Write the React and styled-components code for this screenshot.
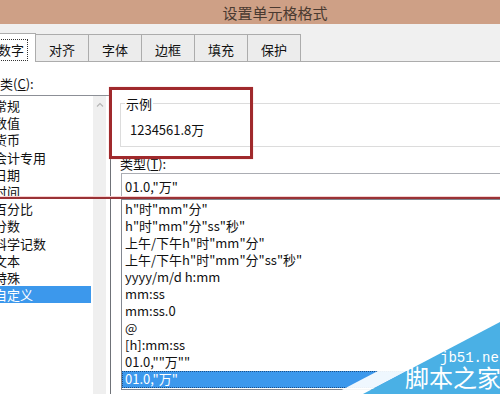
import React from "react";
import styled, { createGlobalStyle } from "styled-components";

const GlobalStyle = createGlobalStyle`
  html, body {
    margin: 0;
    padding: 0;
    width: 500px;
    height: 394px;
    overflow: hidden;
    background: #fff;
  }
  body {
    font-family: "Noto Sans CJK SC", "Liberation Sans", sans-serif;
    font-size: 13px;
    color: #111;
  }
`;

const Screen = styled.div`
  position: relative;
  width: 500px;
  height: 394px;
  overflow: hidden;
`;

const Dialog = styled.div`
  width: 578px;
  height: 394px;
  margin-left: -14px;
  display: flex;
  flex-direction: column;
`;

const TitleBar = styled.div`
  flex: none;
  height: 24px;
  background: #cea086;
  color: #4a3a31;
  font-size: 15px;
  display: flex;
  align-items: center;
  justify-content: center;
`;

const TabStrip = styled.div`
  flex: none;
  height: 37px;
  background: #f0f0f0;
  border-bottom: 1px solid #acacac;
  display: flex;
  align-items: flex-end;
`;

const Tab = styled.div`
  box-sizing: border-box;
  flex: none;
  position: relative;
  z-index: ${(p) => (p.$active ? 1 : 0)};
  width: ${(p) => (p.$first ? 50 : 54)}px;
  height: ${(p) => (p.$active ? 29 : 27)}px;
  margin-left: ${(p) => (p.$first ? 0 : -1)}px;
  margin-bottom: ${(p) => (p.$active ? -1 : 0)}px;
  padding-top: ${(p) => (p.$active ? 4 : 3)}px;
  border: 1px solid #acacac;
  border-bottom: none;
  background: ${(p) => (p.$active ? "#fff" : "#ececec")};
  display: flex;
  align-items: center;
  justify-content: center;
  line-height: 17px;
`;

const FocusText = styled.span`
  padding: 1px 3px 2px;
  outline: 1px dotted #333;
`;

const Body = styled.div`
  flex: 1;
  min-height: 0;
  background: #fff;
  display: grid;
  grid-template-columns: 125px 1fr;
  column-gap: 9px;
`;

const Column = styled.div`
  display: flex;
  flex-direction: column;
  min-height: 0;
`;

const Label = styled.div`
  flex: none;
  line-height: 17px;
  margin-top: ${(p) => p.$top}px;
  padding-left: ${(p) => p.$indent || 0}px;
  u {
    text-decoration: underline;
  }
`;

const CategoryBox = styled.div`
  flex: 1;
  margin-top: 3px;
  border-top: 1px solid #8c8f96;
  border-right: 1px solid #6f7278;
  display: grid;
  grid-template-columns: 1fr 13px;
  column-gap: 2px;
  padding-right: 4px;
`;

const CategoryList = styled.div`
  padding-top: 1px;
`;

const CategoryItem = styled.div`
  height: 17.2px;
  line-height: 17.2px;
  padding-left: 8px;
  white-space: nowrap;
  background: ${(p) => (p.$selected ? "#3c98ec" : "transparent")};
  color: ${(p) => (p.$selected ? "#fff" : "#111")};
`;

const ScrollTrack = styled.div`
  background: #efefef;
  display: flex;
  justify-content: center;
  padding-top: 6px;
`;

const GroupBox = styled.div`
  flex: none;
  box-sizing: border-box;
  height: 44px;
  margin-top: 41px;
  margin-right: 8px;
  border: 1px solid #dcdcdc;
`;

const Legend = styled.div`
  width: fit-content;
  margin: -9px 0 0 4px;
  padding: 0 1px;
  line-height: 17px;
  background: #fff;
`;

const Sample = styled.div`
  padding-left: 9px;
  margin-top: 9px;
  line-height: 17px;
`;

const TypeInput = styled.div`
  flex: none;
  box-sizing: border-box;
  height: 26px;
  margin: 1px 0 0 1px;
  border: 1px solid #abadb3;
  border-bottom: none;
  padding: 0 0 1px 3px;
  display: flex;
  align-items: center;
  white-space: nowrap;
`;

const TypeList = styled.div`
  flex: none;
  box-sizing: border-box;
  height: 191px;
  margin-left: 1px;
  border: 1px solid #828790;
  padding-top: 1px;
`;

const TypeItem = styled.div`
  box-sizing: border-box;
  height: 17px;
  line-height: 16px;
  padding-left: 3px;
  white-space: nowrap;
  background: ${(p) => (p.$selected ? "#3c98ec" : "transparent")};
  color: ${(p) => (p.$selected ? "#fff" : "#111")};
  outline: ${(p) => (p.$selected ? "1px dotted #1d4f86" : "none")};
  outline-offset: -1px;
`;

const Highlight = styled.div`
  position: absolute;
  left: 109px;
  top: 87px;
  width: 144px;
  height: 72px;
  box-sizing: border-box;
  border: 3px solid #a0292c;
  box-shadow: 0 0 1px #e9a3a3;
`;

const RedRule = styled.div`
  position: absolute;
  left: 0;
  right: 0;
  top: 197px;
  height: 2px;
  background: #9a3236;
  box-shadow: 0 -1px 0 #f7d2d2;
`;

const Watermark = styled.div`
  position: absolute;
  left: 330px;
  top: 290px;
  width: 170px;
  height: 104px;
  svg {
    display: block;
  }
`;

const MarkSite = styled.div`
  position: absolute;
  left: 110px;
  top: 60px;
  font-family: "Liberation Mono", "DejaVu Sans Mono", monospace;
  font-size: 14px;
  line-height: 16px;
  color: #fff;
`;

const MarkName = styled.div`
  position: absolute;
  left: 75px;
  top: 73px;
  font-family: "Noto Sans CJK SC", sans-serif;
  font-size: 24px;
  line-height: 28px;
  color: #fff;
  white-space: nowrap;
`;

const tabs = ["数字", "对齐", "字体", "边框", "填充", "保护"];

const categories = [
  "常规",
  "数值",
  "货币",
  "会计专用",
  "日期",
  "时间",
  "百分比",
  "分数",
  "科学记数",
  "文本",
  "特殊",
  "自定义"
];

const formats = [
  'h"时"mm"分"',
  'h"时"mm"分"ss"秒"',
  '上午/下午h"时"mm"分"',
  '上午/下午h"时"mm"分"ss"秒"',
  "yyyy/m/d h:mm",
  "mm:ss",
  "mm:ss.0",
  "@",
  "[h]:mm:ss",
  '01.0,""万""',
  '01.0,"万"'
];

export default function App() {
  return (
    <Screen>
      <GlobalStyle />
      <Dialog>
        <TitleBar>设置单元格格式</TitleBar>
        <TabStrip>
          {tabs.map((t, i) => (
            <Tab key={t} $first={i === 0} $active={i === 0}>
              {i === 0 ? <FocusText>{t}</FocusText> : t}
            </Tab>
          ))}
        </TabStrip>
        <Body>
          <Column>
            <Label $top={13} $indent={1}>
              分类(<u>C</u>):
            </Label>
            <CategoryBox>
              <CategoryList>
                {categories.map((c, i) => (
                  <CategoryItem key={c} $selected={i === categories.length - 1}>
                    {c}
                  </CategoryItem>
                ))}
              </CategoryList>
              <ScrollTrack>
                <svg width="8" height="5" viewBox="0 0 8 5">
                  <path d="M1 4.5 L4 1.5 L7 4.5" fill="none" stroke="#b5b5b5" strokeWidth="1.2" />
                </svg>
              </ScrollTrack>
            </CategoryBox>
          </Column>
          <Column>
            <GroupBox>
              <Legend>示例</Legend>
              <Sample>1234561.8万</Sample>
            </GroupBox>
            <Label $top={8}>
              类型(<u>T</u>):
            </Label>
            <TypeInput>01.0,"万"</TypeInput>
            <TypeList>
              {formats.map((f, i) => (
                <TypeItem key={f} $selected={i === formats.length - 1}>
                  {f}
                </TypeItem>
              ))}
            </TypeList>
          </Column>
        </Body>
      </Dialog>
      <Highlight />
      <RedRule />
      <Watermark>
        <svg width="170" height="104" viewBox="0 0 170 104">
          <polygon points="4,104 170,17 170,32 33,104" fill="#ffffff" opacity="0.92" />
          <polygon points="33,104 170,32 170,104" fill="#4ab0e5" />
        </svg>
        <MarkSite>jb51.net</MarkSite>
        <MarkName>脚本之家</MarkName>
      </Watermark>
    </Screen>
  );
}
